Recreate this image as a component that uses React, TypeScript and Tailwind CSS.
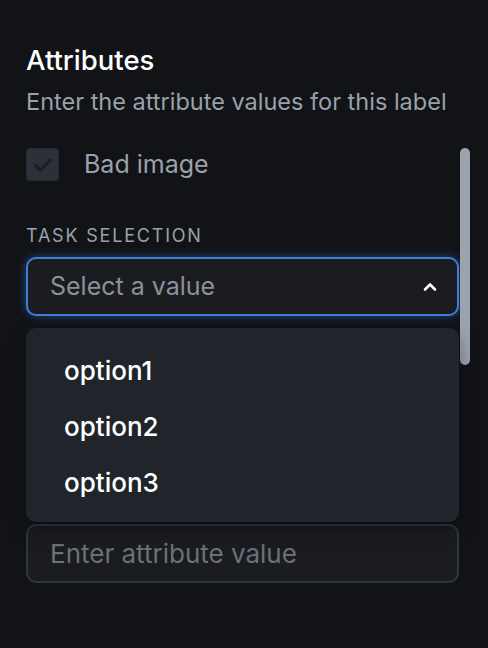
import { useState } from "react"

const OPTIONS = ["option1", "option2", "option3"]

export default function App() {
  const [open] = useState(true)

  return (
    <div
      className="relative h-[648px] w-[488px] overflow-hidden bg-[#111317] pl-[26px] pr-[29px] pt-[44px]"
      style={{ fontFamily: "Inter, 'Noto Sans', sans-serif" }}
    >
      <h2 className="text-[27.5px] font-medium leading-[32px] text-white">Attributes</h2>
      <p className="mt-[12px] whitespace-nowrap text-[23.5px] leading-[28px] text-[#9aa1ab]">
        Enter the attribute values for this label
      </p>

      <label className="mt-[32px] flex items-center gap-[25px]">
        <span className="flex h-[33px] w-[33px] items-center justify-center rounded-[4px] border border-[#262a31] bg-[#2c3039]">
          <svg width="24" height="24" viewBox="0 0 24 24" fill="none">
            <path d="M4.5 12.5l4.8 4.8L19.5 7" stroke="#1b1e24" strokeWidth="3.2" strokeLinecap="round" strokeLinejoin="round" />
          </svg>
        </span>
        <span className="text-[25px] leading-[33px] text-[#9aa1ab]">Bad image</span>
      </label>

      <div className="mt-[43px] text-[18px] uppercase leading-[24px] tracking-[0.1em] text-[#9aa1ab]">
        Task selection
      </div>

      <div className="relative mt-[9px]">
        <button className="flex h-[59px] w-full items-center justify-between rounded-[10px] border-2 border-[#3b7fd9] bg-[#1a1c20] pl-[22px] pr-[20px] shadow-[0_0_10px_rgba(59,130,246,0.45)]">
          <span className="text-[25px] text-[#8a919b]">Select a value</span>
          <svg width="14" height="10" viewBox="0 0 14 10" fill="none">
            <path d="M2 7.5L7 2.5l5 5" stroke="white" strokeWidth="2.6" strokeLinecap="round" strokeLinejoin="round" />
          </svg>
        </button>

        {open && (
          <ul className="absolute left-0 right-0 top-[71px] z-10 rounded-[10px] bg-[#21242b] pb-[12px] pt-[14px] shadow-[0_8px_20px_rgba(0,0,0,0.35)]">
            {OPTIONS.map((o) => (
              <li key={o} className="flex h-[56px] items-center pl-[38px] text-[26px] font-medium text-white">
                {o}
              </li>
            ))}
          </ul>
        )}
      </div>

      <input
        placeholder="Enter attribute value"
        className="mt-[208px] h-[59px] w-full rounded-[10px] border-2 border-[#30353e] bg-[#1a1c20] px-[22px] text-[26px] text-white outline-none placeholder:text-[#6b7079]"
      />

      {/* scrollbar thumb */}
      <div className="absolute left-[460px] top-[148px] h-[217px] w-[10px] rounded-full bg-[#9ca3af]" />
    </div>
  )
}
